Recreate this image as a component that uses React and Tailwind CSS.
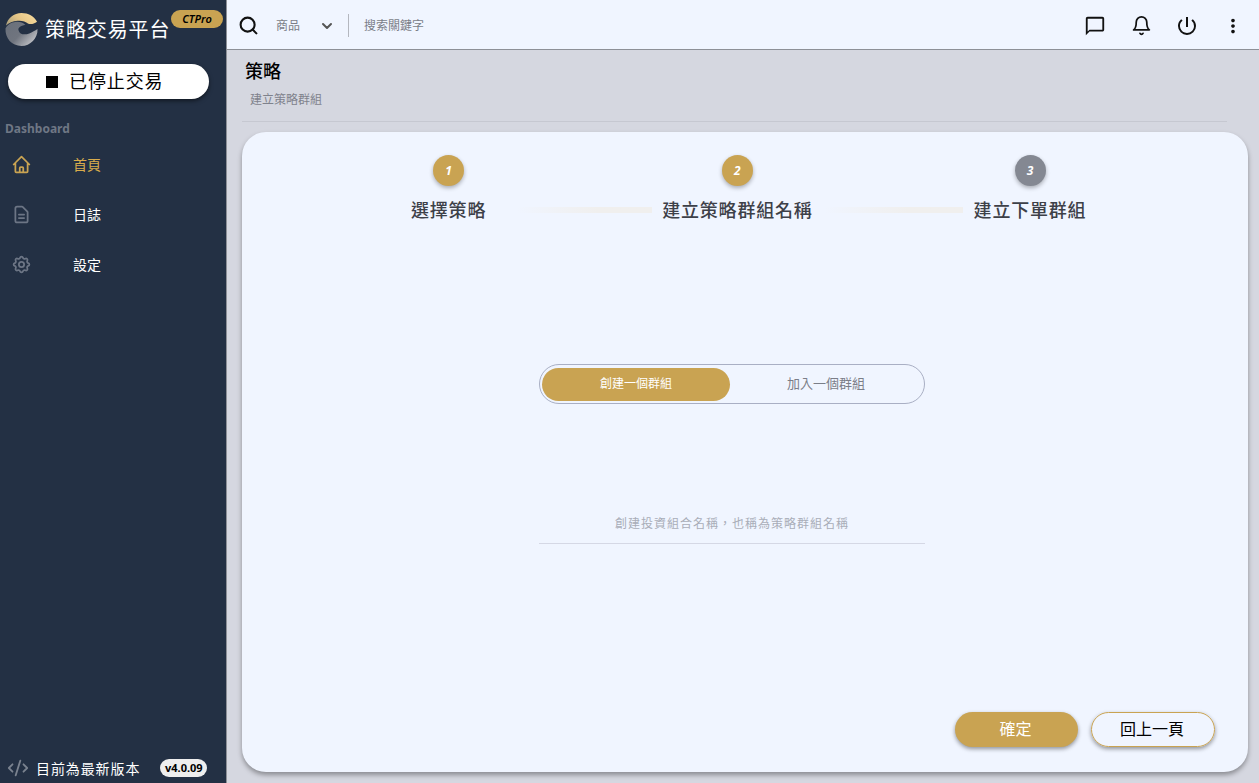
import React, { useState } from 'react';
import { MdOutlineChatBubbleOutline, MdPowerSettingsNew, MdMoreVert } from 'react-icons/md';
import { HiOutlineHome, HiOutlineDocumentText, HiOutlineCog } from 'react-icons/hi';
import { LuCodeXml, LuSearch, LuBell, LuChevronDown } from 'react-icons/lu';

const navItems = [
  { label: '首頁', icon: HiOutlineHome, active: true },
  { label: '日誌', icon: HiOutlineDocumentText },
  { label: '設定', icon: HiOutlineCog },
];

function Logo() {
  return (
    <svg width="33" height="35" viewBox="0 0 34 36" className="shrink-0">
      <defs>
        <linearGradient id="gold" x1="0" y1="0.6" x2="1" y2="0.2">
          <stop offset="0" stopColor="#b3a57f" />
          <stop offset="0.4" stopColor="#e3c486" />
          <stop offset="1" stopColor="#f8dc9e" />
        </linearGradient>
        <linearGradient id="grey" x1="0" y1="0.1" x2="1" y2="0.8">
          <stop offset="0" stopColor="#6a707b" />
          <stop offset="0.5" stopColor="#70757f" />
          <stop offset="1" stopColor="#c9cace" />
        </linearGradient>
      </defs>
      <path d="M1 14C3 6 9 1 17 1c7 0 13 3 16 9-3 2-6 3-9 2-3-2.500-7-3.500-11-3C8 9.500 4 11 1 14z" fill="url(#gold)" />
      <path d="M.5 17C3 12 8 10 13 10c3 0 6 1 8 3-5 1-8 3-7 6 1 4 6 5 11 3 3-1 6-3 8.500-4.500C34 27 26 35 17 35 7 35 0 27 .5 17z" fill="url(#grey)" />
    </svg>
  );
}

function Sidebar() {
  return (
    <aside className="w-[226px] shrink-0 bg-[#233044] flex flex-col">
      <div className="relative h-[62px] flex items-center pl-[5px] pb-[3px] gap-[7px]">
        <Logo />
        <span className="text-white text-[20px] tracking-[0.9px] leading-none">策略交易平台</span>
        <span className="absolute left-[171px] top-[10px] w-[52px] h-[18px] rounded-full bg-[#c9a352] flex items-center justify-center text-[11px] italic font-semibold text-black">CTPro</span>
      </div>
      <button className="mx-[8px] mt-[2px] h-[35px] w-[201px] rounded-full bg-white shadow-[0_2px_4px_rgba(0,0,0,0.5)] flex items-center pl-[38px] gap-[11px] text-black">
        <span className="w-[12px] h-[12px] bg-black" />
        <span className="text-[18px] tracking-[0.9px] leading-none pb-[2px]">已停止交易</span>
      </button>
      <div className="mt-[21px] pl-[5px] text-[12px] font-bold text-[#6f7785] leading-[18px]">Dashboard</div>
      <nav className="mt-[1px] flex flex-col">
        {navItems.map((item) => {
          const Icon = item.icon;
          return (
            <div key={item.label} className="h-[50px] flex items-center pl-[11px]">
              <Icon className={`w-[21px] h-[21px] ${item.active ? 'text-[#c9a352]' : 'text-[#6c7585]'}`} />
              <span className={`ml-[41px] text-[14px] ${item.active ? 'text-[#d9ac4c]' : 'text-white'}`}>{item.label}</span>
            </div>
          );
        })}
      </nav>
      <div className="mt-auto h-[30px] flex items-center pl-[7px]">
        <LuCodeXml className="w-[22px] h-[22px] text-[#7a828f]" />
        <span className="ml-[7px] text-white text-[14px] tracking-[0.9px]">目前為最新版本</span>
        <span className="ml-[20px] h-[18px] w-[47px] rounded-full bg-[#eeeeee] text-black text-[11px] font-bold flex items-center justify-center">v4.0.09</span>
      </div>
    </aside>
  );
}

function Header() {
  return (
    <header className="h-[50px] shrink-0 bg-[#f0f5ff] border-b border-[#8d9097] flex items-center pt-[2px] pl-[11px] pr-[3px]">
      <LuSearch className="w-[21px] h-[21px] text-[#111] [stroke-width:2.4]" />
      <span className="ml-[17px] text-[12px] text-[#7b7e88]">商品</span>
      <LuChevronDown className="ml-[19px] w-[16px] h-[16px] text-[#555] [stroke-width:3]" />
      <span className="ml-[13px] w-px h-[23px] bg-[#b4b7bf]" />
      <span className="ml-[15px] text-[12px] text-[#7b7e88]">搜索關鍵字</span>
      <div className="ml-auto flex items-center text-[#111]">
        <div className="w-[46px] flex justify-center"><MdOutlineChatBubbleOutline className="w-[22px] h-[22px]" /></div>
        <div className="w-[46px] flex justify-center"><LuBell className="w-[21px] h-[21px]" /></div>
        <div className="w-[46px] flex justify-center"><MdPowerSettingsNew className="w-[24px] h-[24px]" /></div>
        <div className="w-[46px] flex justify-center"><MdMoreVert className="w-[22px] h-[22px]" /></div>
      </div>
    </header>
  );
}

function Step({ num, label, current }) {
  return (
    <div className="flex flex-col items-center shrink-0">
      <div className={`w-[31px] h-[31px] rounded-full flex items-center justify-center text-white text-[12px] font-bold italic shadow-[0_2px_4px_rgba(0,0,0,0.3)] ${current ? 'bg-[#c9a352]' : 'bg-[#848892]'}`}>
        {num}
      </div>
      <div className="mt-[11px] text-[18px] font-medium tracking-[0.8px] text-[#3d4048] leading-[26px] whitespace-nowrap">{label}</div>
    </div>
  );
}

function Connector({ className }) {
  return <div className={`h-[6px] mt-[52px] bg-gradient-to-r from-transparent via-[#f0efee] via-60% to-[#f0efee] shrink-0 ${className}`} />;
}

export default function App() {
  const [mode, setMode] = useState('create');

  return (
    <div className="h-screen w-full flex overflow-hidden bg-[#d5d7e0] font-['Noto_Sans','Noto_Sans_CJK_TC',sans-serif]">
      <Sidebar />
      <div className="flex-1 min-w-0 flex flex-col border-l border-[#8d9097]">
        <Header />
        <main className="flex-1 min-h-0 flex flex-col pl-[15px] pr-[11px] pb-[11px]">
          <div className="mr-[21px] h-[72px] shrink-0 border-b border-[#c6c8d1]">
            <h1 className="ml-[3px] mt-[8px] text-[18px] font-medium leading-[26px] text-black">策略</h1>
            <p className="ml-[8px] mt-[7px] text-[12px] leading-[18px] text-[#7f828c]">建立策略群組</p>
          </div>
          <section className="mt-[10px] flex-1 min-h-0 bg-[#f0f5ff] rounded-[24px] shadow-[0_3px_5px_rgba(0,0,0,0.35)] flex flex-col">
            <div className="pt-[23px] pl-[169px] flex">
              <Step num="1" label="選擇策略" current />
              <Connector className="w-[135px] ml-[31px]" />
              <div className="ml-[10px]"><Step num="2" label="建立策略群組名稱" current /></div>
              <Connector className="w-[138px] ml-[12px]" />
              <div className="ml-[11px]"><Step num="3" label="建立下單群組" /></div>
            </div>
            <div className="mt-[141px] ml-[297px] w-[386px] h-[40px] rounded-full border border-[#a9afc4] flex items-center px-[2px]">
              <button onClick={() => setMode('create')} className={`w-[188px] h-[33px] rounded-full text-[12px] ${mode === 'create' ? 'bg-[#c9a352] text-white' : 'text-[#7b7e88]'}`}>創建一個群組</button>
              <button onClick={() => setMode('join')} className={`flex-1 h-[33px] rounded-full text-[13px] ${mode === 'join' ? 'bg-[#c9a352] text-white' : 'text-[#7b7e88]'}`}>加入一個群組</button>
            </div>
            <input
              placeholder="創建投資組合名稱，也稱為策略群組名稱"
              className="mt-[109px] ml-[297px] w-[386px] h-[31px] shrink-0 pb-[10px] bg-transparent border-b border-[#d5d8e5] text-center text-[12px] tracking-[1px] outline-none placeholder:text-[#a9adb8]"
            />
            <div className="mt-auto pb-[25px] pr-[33px] flex justify-end gap-[13px]">
              <button className="w-[123px] h-[35px] pb-[1px] pr-[2px] rounded-full bg-[#c9a352] text-white text-[16px] shadow-[0_2px_4px_rgba(0,0,0,0.4)]">確定</button>
              <button className="w-[124px] h-[35px] pb-[1px] pr-[2px] rounded-full border border-[#c9a352] text-black text-[16px] shadow-[0_2px_4px_rgba(0,0,0,0.4)]">回上一頁</button>
            </div>
          </section>
        </main>
      </div>
    </div>
  );
}
